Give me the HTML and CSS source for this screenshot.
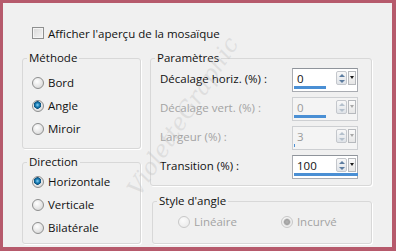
FILE: index.html
```html
<!DOCTYPE html>
<html lang="fr">
	<head>
		<meta charset="utf-8">
		<title>Mosaïque</title>
		<link rel="stylesheet" href="styles.css">
	</head>
	<body>
		<div class="dialog">
			<div class="check-row">
				<span class="checkbox"></span>
				<span>Afficher l'aperçu de la mosaïque</span>
			</div>
			<div class="columns">
				<div class="col">
					<fieldset class="group group-methode">
						<legend>Méthode</legend>
						<div class="radio-list">
							<div class="radio-item"><span class="radio"></span>Bord</div>
							<div class="radio-item"><span class="radio checked"></span>Angle</div>
							<div class="radio-item"><span class="radio"></span>Miroir</div>
						</div>
					</fieldset>
					<fieldset class="group group-direction">
						<legend>Direction</legend>
						<div class="radio-list">
							<div class="radio-item"><span class="radio checked"></span>Horizontale</div>
							<div class="radio-item"><span class="radio"></span>Verticale</div>
							<div class="radio-item"><span class="radio"></span>Bilatérale</div>
						</div>
					</fieldset>
				</div>
				<div class="col">
					<fieldset class="group group-params">
						<legend>Paramètres</legend>
						<div class="param-list">
							<div class="param-row">
								<span class="param-label">Décalage horiz. (%) :</span>
								<div class="spin">
									<span class="spin-value">0</span>
									<span class="spin-arrows"><i class="up"></i><i class="down"></i></span>
									<span class="spin-drop"></span>
									<span class="spin-bar" style="width: 32px"></span>
								</div>
							</div>
							<div class="param-row disabled">
								<span class="param-label">Décalage vert. (%) :</span>
								<div class="spin">
									<span class="spin-value">0</span>
									<span class="spin-arrows"><i class="up"></i><i class="down"></i></span>
									<span class="spin-drop"></span>
									<span class="spin-bar" style="width: 32px"></span>
								</div>
							</div>
							<div class="param-row disabled">
								<span class="param-label">Largeur (%) :</span>
								<div class="spin">
									<span class="spin-value">3</span>
									<span class="spin-arrows"><i class="up"></i><i class="down"></i></span>
									<span class="spin-drop"></span>
									<span class="spin-bar" style="width: 1px"></span>
								</div>
							</div>
							<div class="param-row">
								<span class="param-label">Transition (%) :</span>
								<div class="spin">
									<span class="spin-value">100</span>
									<span class="spin-arrows"><i class="up"></i><i class="down"></i></span>
									<span class="spin-drop"></span>
									<span class="spin-bar" style="width: 64px"></span>
								</div>
							</div>
						</div>
					</fieldset>
					<fieldset class="group group-style">
						<legend>Style d'angle</legend>
						<div class="style-row">
							<div class="radio-item disabled"><span class="radio"></span>Linéaire</div>
							<div class="radio-item disabled"><span class="radio checked"></span>Incurvé</div>
						</div>
					</fieldset>
				</div>
			</div>
			<div class="watermark">VioletteGraphic</div>
		</div>
	</body>
</html>
```

FILE: styles.css
```css
body {
	margin: 0;
}
.dialog {
	position: relative;
	box-sizing: border-box;
	width: 396px;
	height: 251px;
	overflow: hidden;
	background-color: #f0f0f0;
	border-style: solid;
	border-color: #b65a6c;
	border-width: 3px 4px 4px 3px;
	padding-left: 19px;
	font-family: 'Open Sans', sans-serif;
	font-size: 11.5px;
	color: #111111;
}
.check-row {
	display: flex;
	align-items: center;
	gap: 4px;
	height: 12px;
	margin-top: 24px;
	padding-left: 10px;
}
.checkbox {
	box-sizing: border-box;
	width: 12px;
	height: 12px;
	border: 1px solid #8e8f8f;
	background: linear-gradient(135deg, #d8d8d8, #f4f4f4);
	box-shadow: inset 0 0 0 1px #f4f4f4;
}
.columns {
	display: grid;
	grid-template-columns: 119px 222px;
	column-gap: 9px;
	margin-top: 13px;
}
.col {
	display: flex;
	flex-direction: column;
}
.group {
	box-sizing: border-box;
	margin: 0;
	padding: 0;
	border: 1px solid #d8d8d8;
	border-radius: 3px;
	box-shadow: 1px 1px 0 #ffffff;
}
.group legend {
	margin-left: 4px;
	padding: 0 2px;
	line-height: 12px;
}
.group-methode {
	height: 97px;
}
.group-direction {
	height: 88px;
	margin-top: 7px;
}
.group-params {
	height: 134px;
}
.group-style {
	height: 49px;
	margin-top: 9px;
	margin-left: 2px;
}
.radio-list {
	display: flex;
	flex-direction: column;
	padding-left: 9px;
}
.group-methode .radio-list {
	padding-top: 7px;
}
.group-direction .radio-list {
	padding-top: 2px;
}
.radio-item {
	display: flex;
	align-items: center;
	gap: 4px;
	height: 23px;
}
.radio-item.disabled {
	color: #a3a3a3;
}
.radio {
	box-sizing: border-box;
	width: 12px;
	height: 12px;
	border-radius: 50%;
	border: 1px solid #8d8e8e;
	background: radial-gradient(circle at 40% 35%, #ffffff, #dcdcdc 75%);
}
.radio.checked {
	background:
		radial-gradient(circle at 45% 40%, #8fd3f5 0, #1a7fb6 2px, #0b4f7c 3.5px, transparent 4px),
		radial-gradient(circle at 40% 35%, #ffffff, #dcdcdc 75%);
}
.disabled .radio {
	border-color: #c8c8c8;
	background: radial-gradient(circle at 40% 35%, #fbfbfb, #ececec 75%);
}
.disabled .radio.checked {
	background:
		radial-gradient(circle, #b4b4b4 0, #a0a0a0 2.5px, #d8d8d8 3.5px, transparent 4px),
		radial-gradient(circle at 40% 35%, #fbfbfb, #ececec 75%);
}
.param-list {
	display: flex;
	flex-direction: column;
	gap: 5px;
	padding: 4px 13px 0 9px;
}
.param-row {
	display: flex;
	align-items: center;
	justify-content: space-between;
	height: 24px;
}
.param-label {
	margin-bottom: 4px;
}
.param-row.disabled .param-label {
	color: #a3a3a3;
}
.spin {
	position: relative;
	box-sizing: border-box;
	display: flex;
	align-items: flex-start;
	width: 66px;
	height: 24px;
	border: 1px solid #a9acb2;
	border-top-color: #8f949b;
	background-color: #ffffff;
}
.spin-value {
	flex: 1;
	padding: 3px 0 0 4px;
	line-height: 14px;
}
.param-row.disabled .spin {
	border-color: #cdcfd2;
	background-color: #f4f4f4;
}
.param-row.disabled .spin-value {
	color: #9a9a9a;
}
.spin-arrows {
	box-sizing: border-box;
	display: flex;
	flex-direction: column;
	justify-content: space-around;
	align-items: center;
	width: 11px;
	height: 14px;
	margin-top: 2px;
	border: 1px solid #c4c7cc;
	border-radius: 2px;
	background: linear-gradient(#f8f8f8, #dfe3e8);
}
.spin-arrows i {
	width: 0;
	height: 0;
	border-left: 3px solid transparent;
	border-right: 3px solid transparent;
}
.spin-arrows .up {
	border-bottom: 3px solid #5d7da0;
}
.spin-arrows .down {
	border-top: 3px solid #5d7da0;
}
.param-row.disabled .spin-arrows .up {
	border-bottom-color: #b4c0cc;
}
.param-row.disabled .spin-arrows .down {
	border-top-color: #b4c0cc;
}
.spin-drop {
	position: relative;
	box-sizing: border-box;
	width: 8px;
	height: 14px;
	margin: 2px 1px 0 1px;
	border: 1px solid #b6b9bd;
	background: linear-gradient(#fbfbfb, #e6e6e6);
}
.spin-drop::after {
	content: '';
	position: absolute;
	left: 1px;
	top: 4px;
	border-left: 2px solid transparent;
	border-right: 2px solid transparent;
	border-top: 3px solid #1a1a1a;
}
.param-row.disabled .spin-drop::after {
	border-top-color: #a8a8a8;
}
.spin-bar {
	position: absolute;
	left: 1px;
	bottom: 2px;
	height: 3px;
	background-color: #4a8fd4;
}
.style-row {
	display: flex;
	gap: 44px;
	padding: 3px 0 0 25px;
}
.watermark {
	position: absolute;
	left: 88px;
	top: 100px;
	font-family: 'DejaVu Serif', serif;
	font-style: italic;
	font-size: 23px;
	color: rgba(190, 190, 190, 0.35);
	transform: rotate(-57deg);
	pointer-events: none;
}
```
